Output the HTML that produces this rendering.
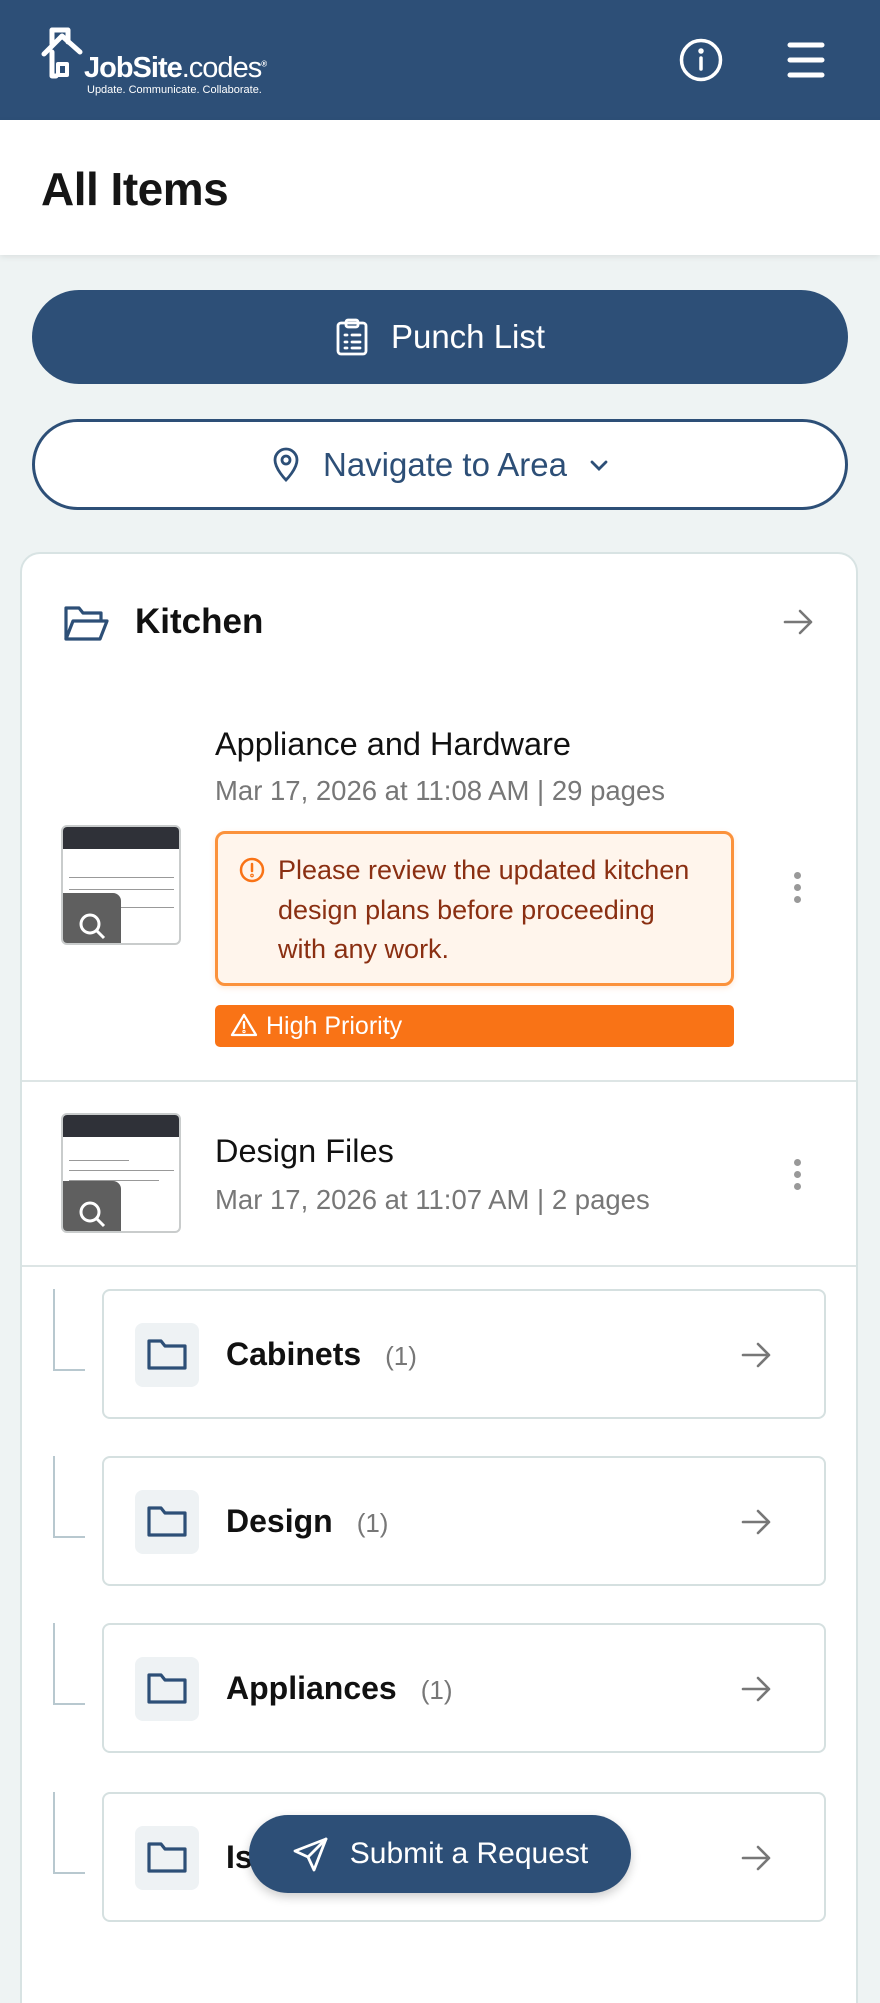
<!DOCTYPE html>
<html><head><meta charset="utf-8"><style>
*{box-sizing:border-box;margin:0;padding:0}
html,body{width:880px;height:2003px;overflow:hidden}
body{background:#eef3f3;font-family:"Liberation Sans",sans-serif;color:#111}
#w{position:relative;width:880px;height:2003px;overflow:hidden}
.abs{position:absolute}
.hdr{left:0;top:0;width:880px;height:120px;background:#2d4f77}
.tbar{left:0;top:120px;width:880px;height:135px;background:#fff;box-shadow:0 2px 6px rgba(0,0,0,.08)}
.btn{left:32px;width:816px;border-radius:48px;display:flex;align-items:center;justify-content:center;font-size:33px}
.card{left:20px;top:552px;width:838px;height:1500px;background:#fff;border:2px solid #d8e3e3;border-radius:20px}
.gray{color:#777}
.sub{left:102px;width:724px;height:130px;border:2px solid #d5e0e0;border-radius:8px;background:#fff}
.fbox{position:absolute;left:31px;top:32px;width:64px;height:64px;background:#eef2f4;border-radius:8px;display:flex;align-items:center;justify-content:center}
.sname{position:absolute;left:122px;top:0;line-height:126px;font-size:32px;font-weight:bold}
.cnt{font-weight:normal;color:#777;font-size:26px;margin-left:24px}
.arr{position:absolute;right:52px;top:50px}
.tree{width:32px;height:82px;border-left:2px solid #b8c8cf;border-bottom:2px solid #b8c8cf;left:53px}
.thumb{width:120px;height:120px;border:2px solid #c9cccc;border-radius:6px;background:#fff;overflow:hidden;left:61px}
.thumb .top{height:22px;background:#2f3138}
.thumb .ln{position:absolute;left:6px;height:1px;background:#999}
.thumb .mag{position:absolute;left:0;bottom:0;width:58px;height:50px;background:#5f5f5f;border-radius:0 8px 0 0}
.keb{width:8px}
.keb i{display:block;width:7px;height:7px;border-radius:50%;background:#999;margin-bottom:5px}
</style></head><body><div id="w">
<div class="abs hdr"></div>
<svg class="abs" style="left:40px;top:22px" width="60" height="60" viewBox="0 0 60 60" fill="none" stroke="#fff" stroke-width="5" stroke-linecap="round" stroke-linejoin="round">
<path d="M12 22 V8 h16 V20"/><path d="M4 32 L22 14 L40 30"/><path d="M12 30 V54 h4"/><rect x="18" y="42" width="9" height="11" stroke-width="4"/>
</svg>
<div class="abs" style="left:84px;top:52px;color:#fff;font-size:29px;font-weight:bold;letter-spacing:-1px">JobSite<span style="font-weight:normal">.codes</span><sup style="font-size:8px">®</sup></div>
<div class="abs" style="left:87px;top:84px;color:#fff;font-size:11px">Update. Communicate. Collaborate.</div>
<svg class="abs" style="left:679px;top:38px" width="44" height="44" viewBox="0 0 44 44" fill="none" stroke="#fff" stroke-width="3.5" stroke-linecap="round"><circle cx="22" cy="22" r="19.5"/><path d="M22 20v11"/><circle cx="22" cy="13" r="1" fill="#fff"/></svg>
<svg class="abs" style="left:786px;top:40px" width="40" height="40" viewBox="0 0 40 40" stroke="#fff" stroke-width="5" stroke-linecap="round"><path d="M4 5h32M4 20h32M4 35h32"/></svg>
<div class="abs tbar"></div>
<div class="abs" style="left:41px;top:162px;font-size:46px;font-weight:bold;letter-spacing:-0.5px;color:#151515">All Items</div>

<div class="abs btn" style="top:290px;height:94px;background:#2d4f77;color:#fff">
<svg width="34" height="38" viewBox="0 0 34 38" fill="none" stroke="#fff" stroke-width="2.8" stroke-linecap="round" stroke-linejoin="round" style="margin-right:22px"><rect x="3" y="5" width="28" height="31" rx="3"/><rect x="11" y="2" width="12" height="7" rx="2"/><path d="M10 17h2M17 17h8M10 24h2M17 24h8M10 30h2M17 30h8"/></svg>Punch List</div>
<div class="abs btn" style="top:419px;height:91px;background:#fff;border:3px solid #2d4f77;color:#2d4f77">
<svg width="30" height="36" viewBox="0 0 30 36" fill="none" stroke="#2d4f77" stroke-width="2.8" style="margin-right:22px"><path d="M15 33 C15 33 4 22 4 13 a11 11 0 0 1 22 0 c0 9-11 20-11 20z"/><circle cx="15" cy="13" r="4"/></svg>Navigate to Area
<svg width="20" height="14" viewBox="0 0 20 14" fill="none" stroke="#2d4f77" stroke-width="2.8" stroke-linecap="round" style="margin-left:22px"><path d="M3 4l7 7 7-7"/></svg></div>

<div class="abs card"></div>
<svg class="abs" style="left:63px;top:603px" width="46" height="40" viewBox="0 0 46 40" fill="none" stroke="#2d4f77" stroke-width="3.2" stroke-linejoin="round"><path d="M3 36V5h13l4 5h18v8"/><path d="M3 36l7-18h34l-7 18z"/></svg>
<div class="abs" style="left:135px;top:602px;font-size:35px;font-weight:bold">Kitchen</div>
<svg class="abs" style="left:782px;top:608px" width="32" height="28" viewBox="0 0 32 28" fill="none" stroke="#777" stroke-width="2.6" stroke-linecap="round" stroke-linejoin="round"><path d="M3 14h26M18 3l11 11-11 11"/></svg>

<div class="abs" style="left:215px;top:726px;font-size:32.5px">Appliance and Hardware</div>
<div class="abs gray" style="left:215px;top:775px;font-size:27.5px">Mar 17, 2026 at 11:08 AM | 29 pages</div>
<div class="abs thumb" style="top:825px"><div class="top"></div><div class="ln" style="top:50px;width:105px"></div><div class="ln" style="top:62px;width:105px"></div><div class="ln" style="top:80px;width:105px"></div><div class="mag"></div>
<svg class="abs" style="left:14px;top:84px" width="30" height="30" viewBox="0 0 30 30" fill="none" stroke="#fff" stroke-width="3"><circle cx="13" cy="13" r="9"/><path d="M20 20l7 7"/></svg></div>
<div class="abs" style="left:215px;top:831px;width:519px;height:155px;border:3px solid #fb923c;border-radius:10px;background:#fff5ec;box-shadow:0 2px 6px rgba(251,146,60,.2)"></div>
<svg class="abs" style="left:238px;top:856px" width="28" height="28" viewBox="0 0 28 28" fill="none" stroke="#f97316" stroke-width="2.5" stroke-linecap="round"><circle cx="14" cy="14" r="11"/><path d="M14 8v7"/><circle cx="14" cy="19.5" r=".6"/></svg>
<div class="abs" style="left:278px;top:851px;width:412px;font-size:27px;line-height:39.5px;color:#8a2f12">Please review the updated kitchen design plans before proceeding with any work.</div>
<div class="abs" style="left:215px;top:1005px;width:519px;height:42px;background:#f97316;border-radius:5px;color:#fff;font-size:25px;line-height:42px;padding-left:51px">High Priority</div>
<svg class="abs" style="left:230px;top:1012px" width="28" height="26" viewBox="0 0 28 26" fill="none" stroke="#fff" stroke-width="2.3" stroke-linejoin="round" stroke-linecap="round"><path d="M14 3L2 23h24z"/><path d="M14 10v6"/><circle cx="14" cy="19.5" r=".5"/></svg>
<div class="abs keb" style="left:794px;top:872px"><i></i><i></i><i></i></div>
<div class="abs" style="left:22px;top:1080px;width:834px;height:2px;background:#dde5e5"></div>

<div class="abs thumb" style="top:1113px"><div class="top"></div><div class="ln" style="top:45px;width:60px"></div><div class="ln" style="top:55px;width:105px"></div><div class="ln" style="top:65px;width:90px"></div><div class="ln" style="top:75px;width:50px"></div><div class="mag"></div>
<svg class="abs" style="left:14px;top:84px" width="30" height="30" viewBox="0 0 30 30" fill="none" stroke="#fff" stroke-width="3"><circle cx="13" cy="13" r="9"/><path d="M20 20l7 7"/></svg></div>
<div class="abs" style="left:215px;top:1133px;font-size:32.5px">Design Files</div>
<div class="abs gray" style="left:215px;top:1184px;font-size:27.5px">Mar 17, 2026 at 11:07 AM | 2 pages</div>
<div class="abs keb" style="left:794px;top:1159px"><i></i><i></i><i></i></div>
<div class="abs" style="left:22px;top:1265px;width:834px;height:2px;background:#dde5e5"></div>

<div class="abs tree" style="top:1289px"></div>
<div class="abs sub" style="top:1289px"><div class="fbox"><svg width="42" height="36" viewBox="0 0 42 36" fill="none" stroke="#2d4f77" stroke-width="3.2" stroke-linejoin="round"><path d="M3 31V4h12l4 5h20v22z"/></svg></div><div class="sname">Cabinets<span class="cnt">(1)</span></div><svg class="arr" width="32" height="28" viewBox="0 0 32 28" fill="none" stroke="#777" stroke-width="2.6" stroke-linecap="round" stroke-linejoin="round"><path d="M3 14h26M18 3l11 11-11 11"/></svg></div>
<div class="abs tree" style="top:1456px"></div>
<div class="abs sub" style="top:1456px"><div class="fbox"><svg width="42" height="36" viewBox="0 0 42 36" fill="none" stroke="#2d4f77" stroke-width="3.2" stroke-linejoin="round"><path d="M3 31V4h12l4 5h20v22z"/></svg></div><div class="sname">Design<span class="cnt">(1)</span></div><svg class="arr" width="32" height="28" viewBox="0 0 32 28" fill="none" stroke="#777" stroke-width="2.6" stroke-linecap="round" stroke-linejoin="round"><path d="M3 14h26M18 3l11 11-11 11"/></svg></div>
<div class="abs tree" style="top:1623px"></div>
<div class="abs sub" style="top:1623px"><div class="fbox"><svg width="42" height="36" viewBox="0 0 42 36" fill="none" stroke="#2d4f77" stroke-width="3.2" stroke-linejoin="round"><path d="M3 31V4h12l4 5h20v22z"/></svg></div><div class="sname">Appliances<span class="cnt">(1)</span></div><svg class="arr" width="32" height="28" viewBox="0 0 32 28" fill="none" stroke="#777" stroke-width="2.6" stroke-linecap="round" stroke-linejoin="round"><path d="M3 14h26M18 3l11 11-11 11"/></svg></div>
<div class="abs tree" style="top:1792px"></div>
<div class="abs sub" style="top:1792px"><div class="fbox"><svg width="42" height="36" viewBox="0 0 42 36" fill="none" stroke="#2d4f77" stroke-width="3.2" stroke-linejoin="round"><path d="M3 31V4h12l4 5h20v22z"/></svg></div><div class="sname">Island<span class="cnt">(1)</span></div><svg class="arr" width="32" height="28" viewBox="0 0 32 28" fill="none" stroke="#777" stroke-width="2.6" stroke-linecap="round" stroke-linejoin="round"><path d="M3 14h26M18 3l11 11-11 11"/></svg></div>

<div class="abs" style="left:249px;top:1815px;width:382px;height:78px;border-radius:40px;background:#2d4f77;color:#fff;font-size:30px;display:flex;align-items:center;justify-content:center;box-shadow:0 4px 10px rgba(0,0,0,.2)">
<svg width="38" height="38" viewBox="0 0 38 38" fill="none" stroke="#fff" stroke-width="2.8" stroke-linejoin="round" stroke-linecap="round" style="margin-right:20px"><path d="M34 4L3 16l13 6 6 13z"/><path d="M34 4L16 22"/></svg>Submit a Request</div>
</div></body></html>
